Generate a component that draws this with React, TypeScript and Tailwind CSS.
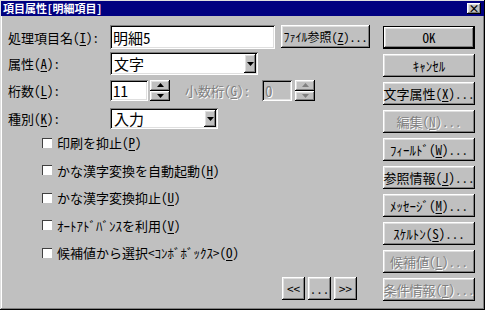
import { ReactNode } from 'react'

const raised = "bg-[#c0c0c0] shadow-[inset_-1px_-1px_#000,inset_1px_1px_#fff,inset_-2px_-2px_#808080,inset_2px_2px_#dfdfdf]"
const sunken = "shadow-[inset_1px_1px_#808080,inset_-1px_-1px_#fff,inset_2px_2px_#000,inset_-2px_-2px_#dfdfdf]"
const dim = "text-[#808080] [text-shadow:1px_1px_0_#fff]"

const M = ({ c }: { c: string }) => <span className="underline underline-offset-2">{c}</span>

function Btn({ children, disabled, def, small }: { children: ReactNode, disabled?: boolean, def?: boolean, small?: boolean }) {
	const inner = (
		<div className={`${raised} h-full w-full flex items-center justify-center whitespace-nowrap ${small ? 'text-[12px]' : 'text-[13px]'} leading-none ${disabled ? dim : 'text-black'}`}>
			{children}
		</div>
	)
	if (def) return <div className="h-[23px] w-full border border-black">{inner}</div>
	return <div className="h-[23px] w-full">{inner}</div>
}

function Arrow({ down = true, gray }: { down?: boolean, gray?: boolean }) {
	return (
		<svg width="7" height="4" viewBox="0 0 7 4">
			<polygon points={down ? "0,0 7,0 3.5,4" : "0,4 7,4 3.5,0"} fill={gray ? '#808080' : '#000'} />
		</svg>
	)
}

function Spin({ gray }: { gray?: boolean }) {
	return (
		<div className="flex flex-col w-[20px] h-full">
			<div className={`${raised} flex-1 flex items-center justify-center`}><Arrow down={false} gray={gray} /></div>
			<div className={`${raised} flex-1 flex items-center justify-center`}><Arrow gray={gray} /></div>
		</div>
	)
}

function Combo({ text, w }: { text: string, w: string }) {
	return (
		<div className={`${sunken} ${w} h-full bg-white flex items-center p-[2px]`}>
			<span className="flex-1 pl-[2px] text-[15px] leading-none">{text}</span>
			<div className={`${raised} w-[12px] h-full flex items-center justify-center`}><Arrow /></div>
		</div>
	)
}

function Check({ children }: { children: ReactNode }) {
	return (
		<div className="h-[27.5px] flex items-center">
			<div className="w-[10px] h-[10px] bg-white shadow-[inset_1px_1px_#404040,inset_-1px_-1px_#fff]" />
			<span className="ml-[5px] text-[13px] leading-none">{children}</span>
		</div>
	)
}

export default function App() {
	return (
		<div className="w-[485px] h-[310px] bg-[#c0c0c0] p-[1px] overflow-hidden text-black font-['Noto_Sans_Mono_CJK_JP','Noto_Sans_CJK_JP',sans-serif] shadow-[inset_-1px_-1px_#000,inset_1px_1px_#dfdfdf,inset_-2px_-2px_#808080,inset_2px_2px_#fff]">
			<div className="h-[15px] bg-[#000080] flex items-center justify-between pl-[2px] pr-[3px]">
				<span className="text-white text-[11px] font-bold leading-none">項目属性[明細項目]</span>
				<div className={`${raised} w-[14px] h-[11px] flex items-center justify-center text-[11px] font-bold leading-none`}>×</div>
			</div>

			<div className="flex pl-[7px] pt-[9px]">
				<div className="w-[375px]">
					<div className="flex items-center h-[24px]">
						<span className="w-[102px] text-[13px] leading-none">処理項目名(<M c="I" />):</span>
						<div className={`${sunken} w-[165px] h-full bg-white flex items-center px-[3px] text-[15px] leading-none`}>明細5</div>
						<div className="ml-[6px] w-[89px] h-full"><Btn small>ﾌｧｲﾙ参照(<M c="Z" />)...</Btn></div>
					</div>
					<div className="flex items-center h-[23px] mt-[3px]">
						<span className="w-[102px] text-[13px] leading-none">属性(<M c="A" />):</span>
						<Combo text="文字" w="w-[148px]" />
					</div>
					<div className="flex items-center h-[21px] mt-[5px]">
						<span className="w-[102px] text-[13px] leading-none">桁数(<M c="L" />):</span>
						<div className={`${sunken} w-[38px] h-full bg-white flex items-center px-[3px] text-[15px] leading-none`}>11</div>
						<div className="ml-[2px] h-full"><Spin /></div>
						<span className={`ml-[15px] w-[77px] text-[13px] leading-none ${dim}`}>小数桁(<M c="G" />):</span>
						<div className={`${sunken} w-[30px] h-full bg-[#c0c0c0] flex items-center px-[3px] text-[15px] leading-none ${dim}`}>0</div>
						<div className="ml-[3px] h-full"><Spin gray /></div>
					</div>
					<div className="flex items-center h-[21px] mt-[7px]">
						<span className="w-[102px] text-[13px] leading-none">種別(<M c="K" />):</span>
						<Combo text="入力" w="w-[108px]" />
					</div>

					<div className="pl-[34px]">
						<Check>印刷を抑止(<M c="P" />)</Check>
						<Check>かな漢字変換を自動起動(<M c="H" />)</Check>
						<Check>かな漢字変換抑止(<M c="U" />)</Check>
						<Check>ｵｰﾄｱﾄﾞﾊﾞﾝｽを利用(<M c="V" />)</Check>
						<Check>候補値から選択&lt;ｺﾝﾎﾞﾎﾞｯｸｽ&gt;(<M c="O" />)</Check>
					</div>

					<div className="flex gap-[3px] pl-[274px] mt-[10px]">
						<div className="w-[23px]"><Btn>&lt;&lt;</Btn></div>
						<div className="w-[23px]"><Btn>...</Btn></div>
						<div className="w-[23px]"><Btn>&gt;&gt;</Btn></div>
					</div>
				</div>

				<div className="w-[92px] mt-[1px] flex flex-col gap-[5px]">
					<Btn def>OK</Btn>
					<Btn>ｷｬﾝｾﾙ</Btn>
					<Btn>文字属性(<M c="X" />)...</Btn>
					<Btn disabled>編集(<M c="N" />)...</Btn>
					<Btn>ﾌｨｰﾙﾄﾞ(<M c="W" />)...</Btn>
					<Btn>参照情報(<M c="J" />)...</Btn>
					<Btn>ﾒｯｾｰｼﾞ(<M c="M" />)...</Btn>
					<Btn>ｽｹﾙﾄﾝ(<M c="S" />)...</Btn>
					<Btn disabled>候補値(<M c="L" />)...</Btn>
					<Btn disabled>条件情報(<M c="T" />)...</Btn>
				</div>
			</div>
		</div>
	)
}
